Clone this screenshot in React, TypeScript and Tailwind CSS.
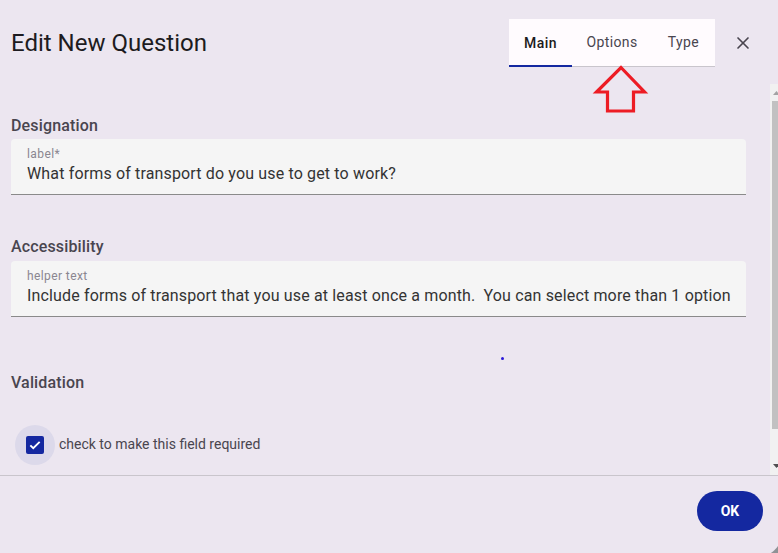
import { X } from "lucide-react";

export default function App() {
  return (
    <div
      className="w-[778px] h-[553px] overflow-hidden bg-[#8f9296]"
      style={{ fontFamily: "Roboto, 'Liberation Sans', sans-serif" }}
    >
      <div className="relative w-[783px] h-[558px] bg-[#ece6f0] rounded-br-[28px] flex flex-col">
        {/* header */}
        <div className="h-[84px] flex items-start">
          <h2 className="pl-[11px] pt-[27px] text-[24px] leading-[32px] text-[#1d1b20] flex-1">
            Edit New Question
          </h2>
          <div className="mt-[19px] h-[48px] flex bg-[#fffbfe] border-b border-[#c9c5cc] text-[14px] tracking-[0.4px]">
            <div className="w-[63px] flex items-center justify-center text-[#1d1b20] font-medium border-b-2 border-[#1428a0] -mb-px pt-[2px]">
              Main
            </div>
            <div className="w-[80px] flex items-center justify-center text-[#49454f]">Options</div>
            <div className="w-[63px] flex items-center justify-center text-[#49454f]">Type</div>
          </div>
          <button className="mt-[33px] ml-[18px] mr-[30px] w-[20px] h-[20px] flex items-center justify-center text-[#49454f]">
            <X size={20} strokeWidth={2} />
          </button>
        </div>

        {/* scroll area */}
        <div className="h-[391px] flex">
          <div className="relative flex-1 pl-[11px] pr-[24px] pt-[30px]">
            <div className="text-[16px] leading-[24px] font-medium text-[#49454f] tracking-[0.15px]">Designation</div>
            <div className="mt-px h-[56px] bg-[#f5f5f5] rounded-t-[4px] border-b border-[#8a8a8a] pl-[16px] pt-[7px]">
              <div className="text-[12px] leading-[16px] text-[#8a8690] tracking-[0.4px]">label*</div>
              <div className="text-[16px] leading-[24px] text-[#333] tracking-[0.15px]">
                What forms of transport do you use to get to work?
              </div>
            </div>

            <div className="mt-[40px] text-[16px] leading-[24px] font-medium text-[#49454f] tracking-[0.15px]">Accessibility</div>
            <div className="mt-[2px] h-[56px] bg-[#f5f5f5] rounded-t-[4px] border-b border-[#8a8a8a] pl-[16px] pt-[7px]">
              <div className="text-[12px] leading-[16px] text-[#8a8690] tracking-[0.4px]">helper text</div>
              <div className="text-[16px] leading-[24px] text-[#333] whitespace-nowrap tracking-[0.15px]">
                Include forms of transport that you use at least once a month.&nbsp; You can select more than 1 option
              </div>
            </div>

            <div className="absolute left-[501px] top-[273px] w-[3px] h-[3px] rounded-full bg-[#2a18d8]" />

            <div className="mt-[54px] text-[16px] leading-[24px] font-medium text-[#49454f] tracking-[0.15px]">Validation</div>
            <div className="mt-[30px] flex items-center">
              <div className="ml-[4px] w-[40px] h-[40px] rounded-full bg-[#dcd9ea] flex items-center justify-center">
                <div className="w-[18px] h-[18px] rounded-[2px] bg-[#1428a0] flex items-center justify-center">
                  <svg width="14" height="14" viewBox="0 0 24 24" fill="none">
                    <path d="M4 12.5l5 5L20 6.5" stroke="white" strokeWidth="3.2" />
                  </svg>
                </div>
              </div>
              <span className="ml-[4px] -mt-px text-[14px] text-[#49454f]">check to make this field required</span>
            </div>
          </div>

          {/* scrollbar */}
          <div className="w-[13px] bg-[#f1f1f1] flex flex-col items-center">
            <div className="h-[17px] flex items-center justify-center">
              <svg width="7" height="4" viewBox="0 0 7 4"><path d="M0 4L3.5 0L7 4Z" fill="#a3a3a3" /></svg>
            </div>
            <div className="w-[9px] h-[328px] bg-[#c1c1c1]" />
            <div className="flex-1 flex items-end pb-[7px]">
              <svg width="7" height="4" viewBox="0 0 7 4"><path d="M0 0L3.5 4L7 0Z" fill="#505050" /></svg>
            </div>
          </div>
        </div>

        {/* footer */}
        <div className="flex-1 border-t border-[#c9c5cc] flex justify-end pt-[15px] pr-[20px]">
          <button className="w-[66px] h-[40px] rounded-full bg-[#1428a0] text-white text-[14px] font-bold">
            OK
          </button>
        </div>

        {/* red arrow annotation */}
        <svg className="absolute left-[592px] top-[64px]" width="58" height="52" viewBox="0 0 58 52">
          <path
            d="M29 3.5L52.5 28H41.5V47H15.5V28H4.5Z"
            fill="none"
            stroke="#ed1c24"
            strokeWidth="3.2"
            strokeLinejoin="miter"
          />
        </svg>
      </div>
    </div>
  );
}
